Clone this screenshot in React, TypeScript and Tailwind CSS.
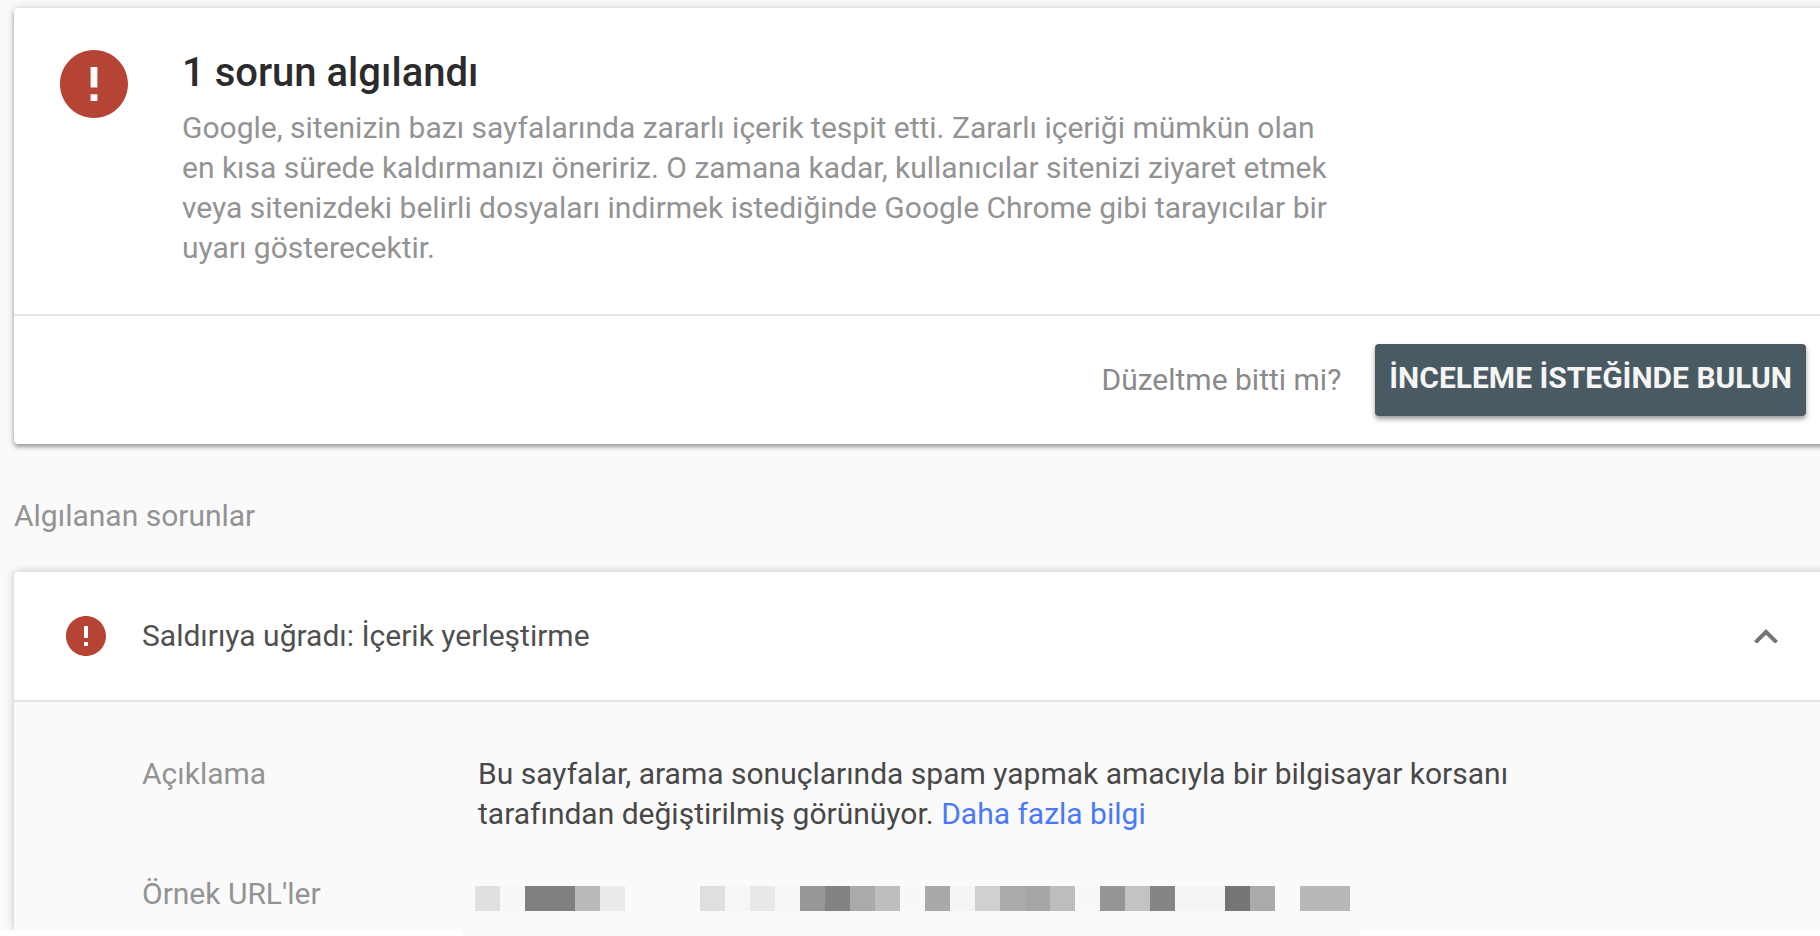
import { useState } from "react";

const maskCells = [
  "bg-[#e0e0e0]", "bg-[#f7f7f7]", "bg-[#808080]", "bg-[#808080]", "bg-[#bababa]", "bg-[#ebebeb]", "bg-[#fafafa]",
  "bg-[#fafafa]", "bg-[#fafafa]", "bg-[#dfdfdf]", "bg-[#f6f6f6]", "bg-[#e8e8e8]", "bg-[#f6f6f6]", "bg-[#989898]",
  "bg-[#838383]", "bg-[#aaaaaa]", "bg-[#bebebe]", "bg-[#f8f8f8]", "bg-[#a9a9a9]", "bg-[#f5f5f5]", "bg-[#d0d0d0]",
  "bg-[#ababab]", "bg-[#a6a6a6]", "bg-[#bdbdbd]", "bg-[#f8f8f8]", "bg-[#969696]", "bg-[#c3c3c3]", "bg-[#858585]",
  "bg-[#f5f5f5]", "bg-[#f5f5f5]", "bg-[#757575]", "bg-[#aaaaaa]", "bg-[#fafafa]", "bg-[#b8b8b8]", "bg-[#b8b8b8]",
];

function ErrorIcon({ className }: { className: string }) {
  return (
    <svg viewBox="2 2 20 20" className={className} aria-hidden="true">
      <path
        fill="#b54434"
        d="M12 2C6.48 2 2 6.48 2 12s4.48 10 10 10 10-4.48 10-10S17.52 2 12 2zm1 15h-2v-2h2v2zm0-4h-2V7h2v6z"
      />
    </svg>
  );
}

function Summary() {
  return (
    <section className="-mr-2 rounded-l bg-white shadow-[0_3px_4px_rgba(0,0,0,0.32),0_0_8px_rgba(0,0,0,0.16)]">
      <div className="flex items-start gap-[54px] pt-[42px] pr-6 pb-[46px] pl-[46px]">
        <ErrorIcon className="size-[68px] shrink-0" />
        <div className="max-w-[1160px]">
          <h1 className="mb-3 text-[40px] leading-[46px] font-medium text-[#2b2b2b]">1 sorun algılandı</h1>
          <p className="text-[30px] leading-10 text-[#939393]">
            Google, sitenizin bazı sayfalarında zararlı içerik tespit etti. Zararlı içeriği mümkün olan en kısa sürede
            kaldırmanızı öneririz. O zamana kadar, kullanıcılar sitenizi ziyaret etmek veya sitenizdeki belirli
            dosyaları indirmek istediğinde Google Chrome gibi tarayıcılar bir uyarı gösterecektir.
          </p>
        </div>
      </div>
      <div className="flex items-center justify-end gap-[34px] border-t-2 border-[#e4e4e4] py-7 pr-[22px]">
        <span className="text-[30px] leading-10 text-[#8a8a8a]">Düzeltme bitti mi?</span>
        <button
          type="button"
          className="h-[72px] rounded bg-[#4a5a63] px-3.5 pb-1 text-[30px] leading-10 font-bold text-[#f5f5f5] shadow-[0_3px_5px_rgba(0,0,0,0.4)]"
        >
          İNCELEME İSTEĞİNDE BULUN
        </button>
      </div>
    </section>
  );
}

function Issue() {
  const [open, setOpen] = useState(true);
  return (
    <section className="-mr-2 rounded-tl bg-[#fafafa] shadow-[0_0_8px_rgba(0,0,0,0.24)]">
      <h3>
        <button
          type="button"
          aria-expanded={open}
          onClick={() => setOpen(!open)}
          className="flex w-full items-center rounded-tl border-b-2 border-[#e4e4e4] bg-white py-11 pr-[50px] pl-[52px] text-left text-[30px] leading-10 text-[#505050]"
        >
          <ErrorIcon className="mr-9 size-10 shrink-0" />
          <span className="grow">Saldırıya uğradı: İçerik yerleştirme</span>
          <svg viewBox="6 8 12 7.41" className={open ? "w-6" : "w-6 rotate-180"} aria-hidden="true">
            <path fill="#757575" d="M12 8l-6 6 1.41 1.41L12 10.83l4.59 4.58L18 14z" />
          </svg>
        </button>
      </h3>
      {open && (
        <dl className="grid grid-cols-[333px_1fr] gap-y-10 pt-[52px] pr-6 pb-4 pl-32 text-[30px] leading-10">
          <dt className="text-[#939393]">Açıklama</dt>
          <dd className="max-w-[1060px] pl-[3px] text-[#484848]">
            Bu sayfalar, arama sonuçlarında spam yapmak amacıyla bir bilgisayar korsanı tarafından değiştirilmiş
            görünüyor.{" "}
            <a href="#bilgi" className="text-[#4a78fa]">
              Daha fazla bilgi
            </a>
          </dd>
          <dt className="text-[#939393]">Örnek URL'ler</dt>
          <dd className="flex items-start pt-3">
            {maskCells.map((cell, i) => (
              <span key={i} className={`${cell} h-[25px] w-[25px] shrink-0`} />
            ))}
          </dd>
        </dl>
      )}
    </section>
  );
}

export default function App() {
  return (
    <div className="bg-white font-[Roboto,sans-serif]">
      <main className="overflow-hidden bg-[#fafafa] pt-2 pl-3.5">
        <Summary />
        <h2 className="pt-[52px] pb-9 text-[30px] leading-10 text-[#939393]">Algılanan sorunlar</h2>
        <Issue />
      </main>
      <div className="flex">
        <div className="ml-[462px] h-1.5 w-[898px] bg-[#fafafa]" />
      </div>
    </div>
  );
}
